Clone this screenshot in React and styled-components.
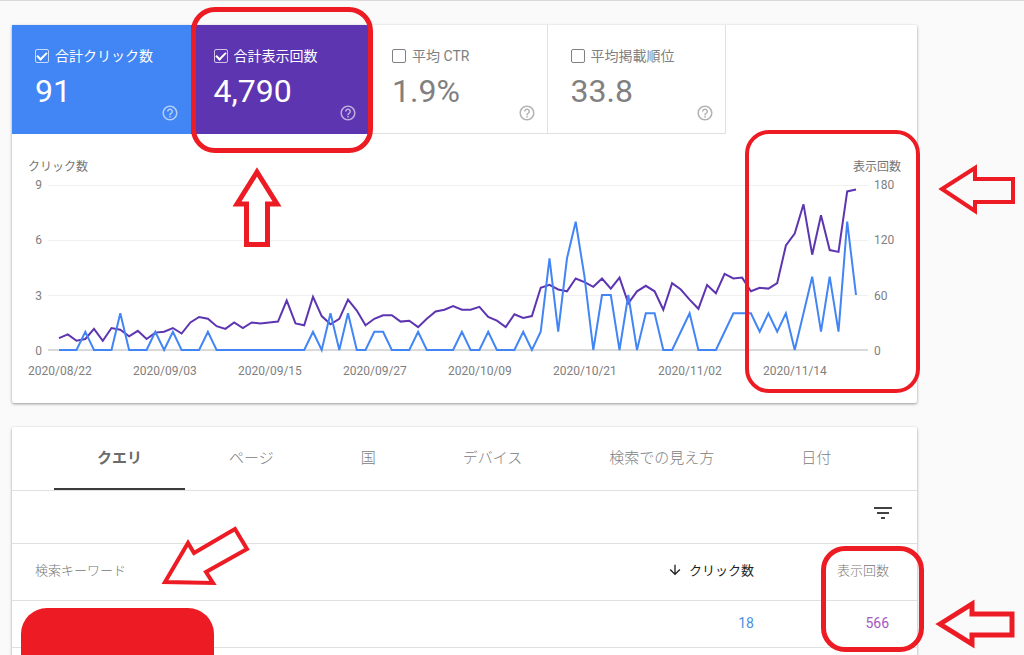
import React, { useState } from "react";
import styled, { createGlobalStyle } from "styled-components";
import { MdArrowDownward, MdFilterList, MdHelpOutline } from "react-icons/md";

const METRICS = [
  { id: "clicks", label: "合計クリック数", value: "91", color: "#4285f4" },
  { id: "impressions", label: "合計表示回数", value: "4,790", color: "#5e35b1" },
  { id: "ctr", label: "平均 CTR", value: "1.9%", color: "#00897b" },
  { id: "position", label: "平均掲載順位", value: "33.8", color: "#e8710a" },
];

const TABS = ["クエリ", "ページ", "国", "デバイス", "検索での見え方", "日付"];

const DATES = [
  "2020/08/22",
  "2020/09/03",
  "2020/09/15",
  "2020/09/27",
  "2020/10/09",
  "2020/10/21",
  "2020/11/02",
  "2020/11/14",
];

// one value per day, 2020/08/22 - 2020/11/21
const CLICKS = [
  0, 0, 0, 1, 0, 0, 0, 2, 0, 0, 0, 1, 0, 1, 0, 0, 0, 1, 0, 0, 0, 0, 0, 0, 0, 0,
  0, 0, 0, 1, 0, 2, 0, 2, 0, 0, 1, 1, 0, 0, 0, 1, 0, 0, 0, 0, 1, 0, 0, 1, 0, 0,
  0, 1, 0, 1, 5, 1, 5, 7, 4, 0, 3, 3, 0, 3, 0, 2, 2, 0, 0, 1, 2, 0, 0, 0, 1, 2,
  2, 2, 1, 2, 1, 2, 0, 2, 4, 1, 4, 1, 7, 3,
];

const IMPRESSIONS = [
  13, 17, 10, 12, 23, 10, 24, 22, 15, 21, 12, 19, 20, 24, 18, 30, 36, 34, 26,
  23, 30, 24, 30, 29, 30, 31, 54, 29, 27, 58, 37, 28, 34, 55, 43, 27, 34, 38,
  38, 31, 32, 25, 34, 42, 44, 48, 44, 44, 47, 36, 32, 25, 39, 35, 37, 68, 71,
  66, 64, 78, 74, 69, 78, 67, 79, 51, 64, 70, 64, 44, 73, 66, 55, 45, 71, 62,
  83, 78, 79, 64, 68, 67, 73, 114, 127, 159, 104, 147, 109, 107, 173, 175,
];

const PLOT_WIDTH = 820;
const PLOT_HEIGHT = 166;

const toPoints = (values, max) =>
  values
    .map((value, i) => {
      const x = 11 + (i * (PLOT_WIDTH - 23)) / (values.length - 1);
      const y = 165 - (value / max) * 165;
      return `${x.toFixed(1)},${y.toFixed(1)}`;
    })
    .join(" ");

export default function App() {
  const [active, setActive] = useState(["clicks", "impressions"]);
  const [tab, setTab] = useState("クエリ");

  const toggle = (id) =>
    setActive((prev) =>
      prev.includes(id) ? prev.filter((v) => v !== id) : [...prev, id]
    );

  return (
    <Page>
      <GlobalStyle />
      <Card>
        <MetricList>
          {METRICS.map((metric) => {
            const on = active.includes(metric.id);
            return (
              <Metric key={metric.id} $on={on} $color={metric.color}>
                <MetricLabel>
                  <Checkbox
                    type="checkbox"
                    checked={on}
                    onChange={() => toggle(metric.id)}
                  />
                  {metric.label}
                </MetricLabel>
                <MetricValue>{metric.value}</MetricValue>
                <HelpButton type="button" aria-label="ヘルプ">
                  <MdHelpOutline size={18} />
                </HelpButton>
                {metric.id === "impressions" && (
                  <>
                    <MetricRing />
                    <UpArrow viewBox="0 0 52 82">
                      <path d="M26 6 L46 38 H36.500 V78.500 H15.500 V38 H6 Z" />
                    </UpArrow>
                  </>
                )}
              </Metric>
            );
          })}
        </MetricList>

        <ChartSection>
          <AxisTitles>
            <span>クリック数</span>
            <span>表示回数</span>
          </AxisTitles>
          <ChartBody>
            <Ticks $align="right">
              <span>9</span>
              <span>6</span>
              <span>3</span>
              <span>0</span>
            </Ticks>
            <Plot
              viewBox={`0 0 ${PLOT_WIDTH} ${PLOT_HEIGHT}`}
              preserveAspectRatio="none"
            >
              {[0.5, 55.5, 110.5].map((y) => (
                <line key={y} x1="0" x2="820" y1={y} y2={y} stroke="#f0f0f0" />
              ))}
              <line x1="0" x2="820" y1="165" y2="165" stroke="#b4b4b4" />
              {active.includes("impressions") && (
                <Series points={toPoints(IMPRESSIONS, 180)} stroke="#5e35b1" />
              )}
              {active.includes("clicks") && (
                <Series points={toPoints(CLICKS, 9)} stroke="#4285f4" />
              )}
            </Plot>
            <Ticks $align="left">
              <span>180</span>
              <span>120</span>
              <span>60</span>
              <span>0</span>
            </Ticks>
          </ChartBody>
          <DateRow>
            {DATES.map((date) => (
              <span key={date}>{date}</span>
            ))}
          </DateRow>
          <ChartRing />
          <ChartArrow viewBox="0 0 78 54">
            <path d="M4 27 L37 6 V17 H75 V40 H37 V49 Z" />
          </ChartArrow>
        </ChartSection>
      </Card>

      <Card>
        <TabList role="tablist">
          {TABS.map((name) => (
            <Tab
              key={name}
              type="button"
              role="tab"
              aria-selected={tab === name}
              $on={tab === name}
              onClick={() => setTab(name)}
            >
              {name}
            </Tab>
          ))}
        </TabList>
        <Toolbar>
          <FilterButton type="button" aria-label="フィルタ">
            <MdFilterList size={24} />
          </FilterButton>
        </Toolbar>
        <TableArea>
          <Table>
            <thead>
              <tr>
                <HeadCell>検索キーワード</HeadCell>
                <HeadCell $number $sorted>
                  <SortLabel>
                    <MdArrowDownward size={16} />
                    クリック数
                  </SortLabel>
                </HeadCell>
                <HeadCell $number $last>
                  表示回数
                </HeadCell>
              </tr>
            </thead>
            <tbody>
              <tr>
                <Cell />
                <Cell $number $color="#4a90e2">
                  18
                </Cell>
                <Cell $number $last $color="#a259c4">
                  566
                </Cell>
              </tr>
              <tr>
                <Cell />
                <Cell $number />
                <Cell $number $last />
              </tr>
            </tbody>
          </Table>
          <Redaction />
          <KeywordArrow viewBox="0 0 90 62">
            <path d="M4 57 L27 18 L33 28 L74 4 L86 24 L45 47 L52 58 Z" />
          </KeywordArrow>
          <TableRing />
          <TableArrow viewBox="0 0 82 54">
            <path d="M6 27 L38 7 V17 H78 V38 H38 V47 Z" />
          </TableArrow>
        </TableArea>
      </Card>
    </Page>
  );
}

const GlobalStyle = createGlobalStyle`
  * {
    box-sizing: border-box;
  }
  body {
    margin: 0;
    background: #fafafa;
    font-family: Roboto, "Noto Sans CJK JP", sans-serif;
    color: #757575;
  }
  button {
    padding: 0;
    border: 0;
    background: none;
    color: inherit;
    font-family: inherit;
    cursor: pointer;
  }
`;

const Page = styled.main`
  display: flex;
  flex-direction: column;
  gap: 24px;
  height: 100vh;
  padding: 24px 107px 0 12px;
  border-top: 1px solid #dadada;
  overflow: hidden;
`;

const Card = styled.section`
  flex-shrink: 0;
  background: #fff;
  border-radius: 2px;
  box-shadow: 0 1px 3px rgba(0, 0, 0, 0.4);
`;

const MetricList = styled.div`
  display: grid;
  grid-template-columns: repeat(4, 1fr);
  max-width: 714px;
`;

const Metric = styled.div`
  position: relative;
  display: flex;
  flex-direction: column;
  height: 109px;
  padding: 20px 11px 12px 23px;
  border-right: 1px solid ${(props) => (props.$on ? props.$color : "#e0e0e0")};
  border-bottom: 1px solid ${(props) => (props.$on ? props.$color : "#e0e0e0")};
  background: ${(props) => (props.$on ? props.$color : "#fff")};
  color: ${(props) => (props.$on ? "#fff" : "#808080")};
`;

const MetricLabel = styled.label`
  display: flex;
  align-items: center;
  gap: 6px;
  font-size: 14px;
  line-height: 22px;
  white-space: nowrap;
`;

const Checkbox = styled.input`
  appearance: none;
  display: grid;
  place-items: center;
  width: 14px;
  height: 14px;
  margin: 0;
  border: 1px solid;
  border-radius: 2px;
  color: inherit;

  &:checked {
    border-color: rgba(255, 255, 255, 0.7);
  }
  &:checked::after {
    content: "";
    width: 8px;
    height: 4px;
    margin-bottom: 3px;
    border: solid #fff;
    border-width: 0 0 2px 2px;
    transform: rotate(-45deg);
  }
`;

const MetricValue = styled.div`
  font-size: 32px;
  line-height: 48px;
`;

const HelpButton = styled.button`
  display: flex;
  align-self: flex-end;
  margin-top: -11px;
  opacity: 0.6;
`;

const ChartSection = styled.div`
  position: relative;
  padding: 24px 16px;
  font-size: 12px;
`;

const AxisTitles = styled.div`
  display: flex;
  justify-content: space-between;
  line-height: 18px;
`;

const ChartBody = styled.div`
  display: grid;
  grid-template-columns: 20px 1fr 33px;
  height: 166px;
  margin-top: 9px;
`;

const Ticks = styled.div`
  display: flex;
  flex-direction: column;
  justify-content: space-between;
  margin: -8px 0;
  padding: 0 6px;
  color: #808080;
  line-height: 16px;
  text-align: ${(props) => props.$align};
`;

const Plot = styled.svg`
  display: block;
  width: 100%;
  height: 166px;
  overflow: visible;
`;

const Series = styled.polyline`
  fill: none;
  stroke-width: 2;
  vector-effect: non-scaling-stroke;
`;

const DateRow = styled.div`
  display: grid;
  grid-template-columns: repeat(8, 1fr);
  margin: 12px 33px 0 0;
  color: #808080;
  line-height: 16px;
`;

const TabList = styled.div`
  display: flex;
  gap: 1px;
  height: 64px;
  padding: 0 42px;
  border-bottom: 1px solid #e0e0e0;
`;

const Tab = styled.button`
  padding: 0 43px 2px;
  border-bottom: 2px solid ${(props) => (props.$on ? "#3c3c3c" : "transparent")};
  color: ${(props) => (props.$on ? "#6b6b6b" : "#808080")};
  font-size: 15px;
  font-weight: ${(props) => (props.$on ? 700 : 300)};
  white-space: nowrap;
`;

const Toolbar = styled.div`
  display: flex;
  align-items: center;
  justify-content: flex-end;
  height: 53px;
  padding: 0 22px 8px;
  border-bottom: 1px solid #e0e0e0;
`;

const FilterButton = styled.button`
  display: flex;
  color: #424242;
`;

const TableArea = styled.div`
  position: relative;
`;

const Table = styled.table`
  width: 100%;
  border-collapse: separate;
  border-spacing: 0;
`;

const HeadCell = styled.th`
  width: ${(props) => (props.$last ? "163px" : props.$number ? "160px" : "auto")};
  height: 57px;
  padding: 0 ${(props) => (props.$last ? 28 : 0)}px 5px
    ${(props) => (props.$number ? 0 : 23)}px;
  border-bottom: 1px solid #e0e0e0;
  color: ${(props) => (props.$sorted ? "#212121" : "#757575")};
  font-size: 13px;
  font-weight: ${(props) => (props.$sorted ? 400 : 300)};
  text-align: ${(props) => (props.$number ? "right" : "left")};
`;

const SortLabel = styled.span`
  display: flex;
  align-items: center;
  justify-content: flex-end;
  gap: 6px;
`;

const Cell = styled.td`
  height: 47px;
  padding: 0 ${(props) => (props.$last ? 28 : 0)}px 3px 0;
  border-bottom: 1px solid #e0e0e0;
  color: ${(props) => props.$color || "inherit"};
  font-size: 14px;
  text-align: ${(props) => (props.$number ? "right" : "left")};
`;

// 赤枠・矢印の注釈
const Ring = styled.div`
  position: absolute;
  border: 5px solid #ed1c24;
  border-radius: 24px;
  pointer-events: none;
  z-index: 1;
`;

const Arrow = styled.svg`
  position: absolute;
  fill: #fff;
  stroke: #ed1c24;
  stroke-width: 4;
  pointer-events: none;
  z-index: 1;
`;

const MetricRing = styled(Ring)`
  top: -18px;
  left: 0;
  width: 182px;
  height: 146px;
`;

const UpArrow = styled(Arrow)`
  top: 141px;
  left: 40px;
  width: 52px;
  height: 82px;
  stroke-width: 5;
`;

const ChartRing = styled(Ring)`
  top: -4px;
  right: -3px;
  width: 175px;
  height: 263px;
  border-width: 4px;
`;

const ChartArrow = styled(Arrow)`
  top: 28px;
  right: -99px;
  width: 78px;
  height: 54px;
  fill: none;
`;

const KeywordArrow = styled(Arrow)`
  top: -19px;
  left: 149px;
  width: 90px;
  height: 62px;
`;

const TableRing = styled(Ring)`
  top: 2px;
  right: -7px;
  width: 103px;
  height: 106px;
`;

const TableArrow = styled(Arrow)`
  top: 53px;
  right: -99px;
  width: 82px;
  height: 54px;
  fill: none;
  stroke-width: 5;
`;

const Redaction = styled.div`
  position: absolute;
  top: 64px;
  left: 9px;
  width: 193px;
  height: 88px;
  border-radius: 26px;
  background: #ed1c24;
`;
